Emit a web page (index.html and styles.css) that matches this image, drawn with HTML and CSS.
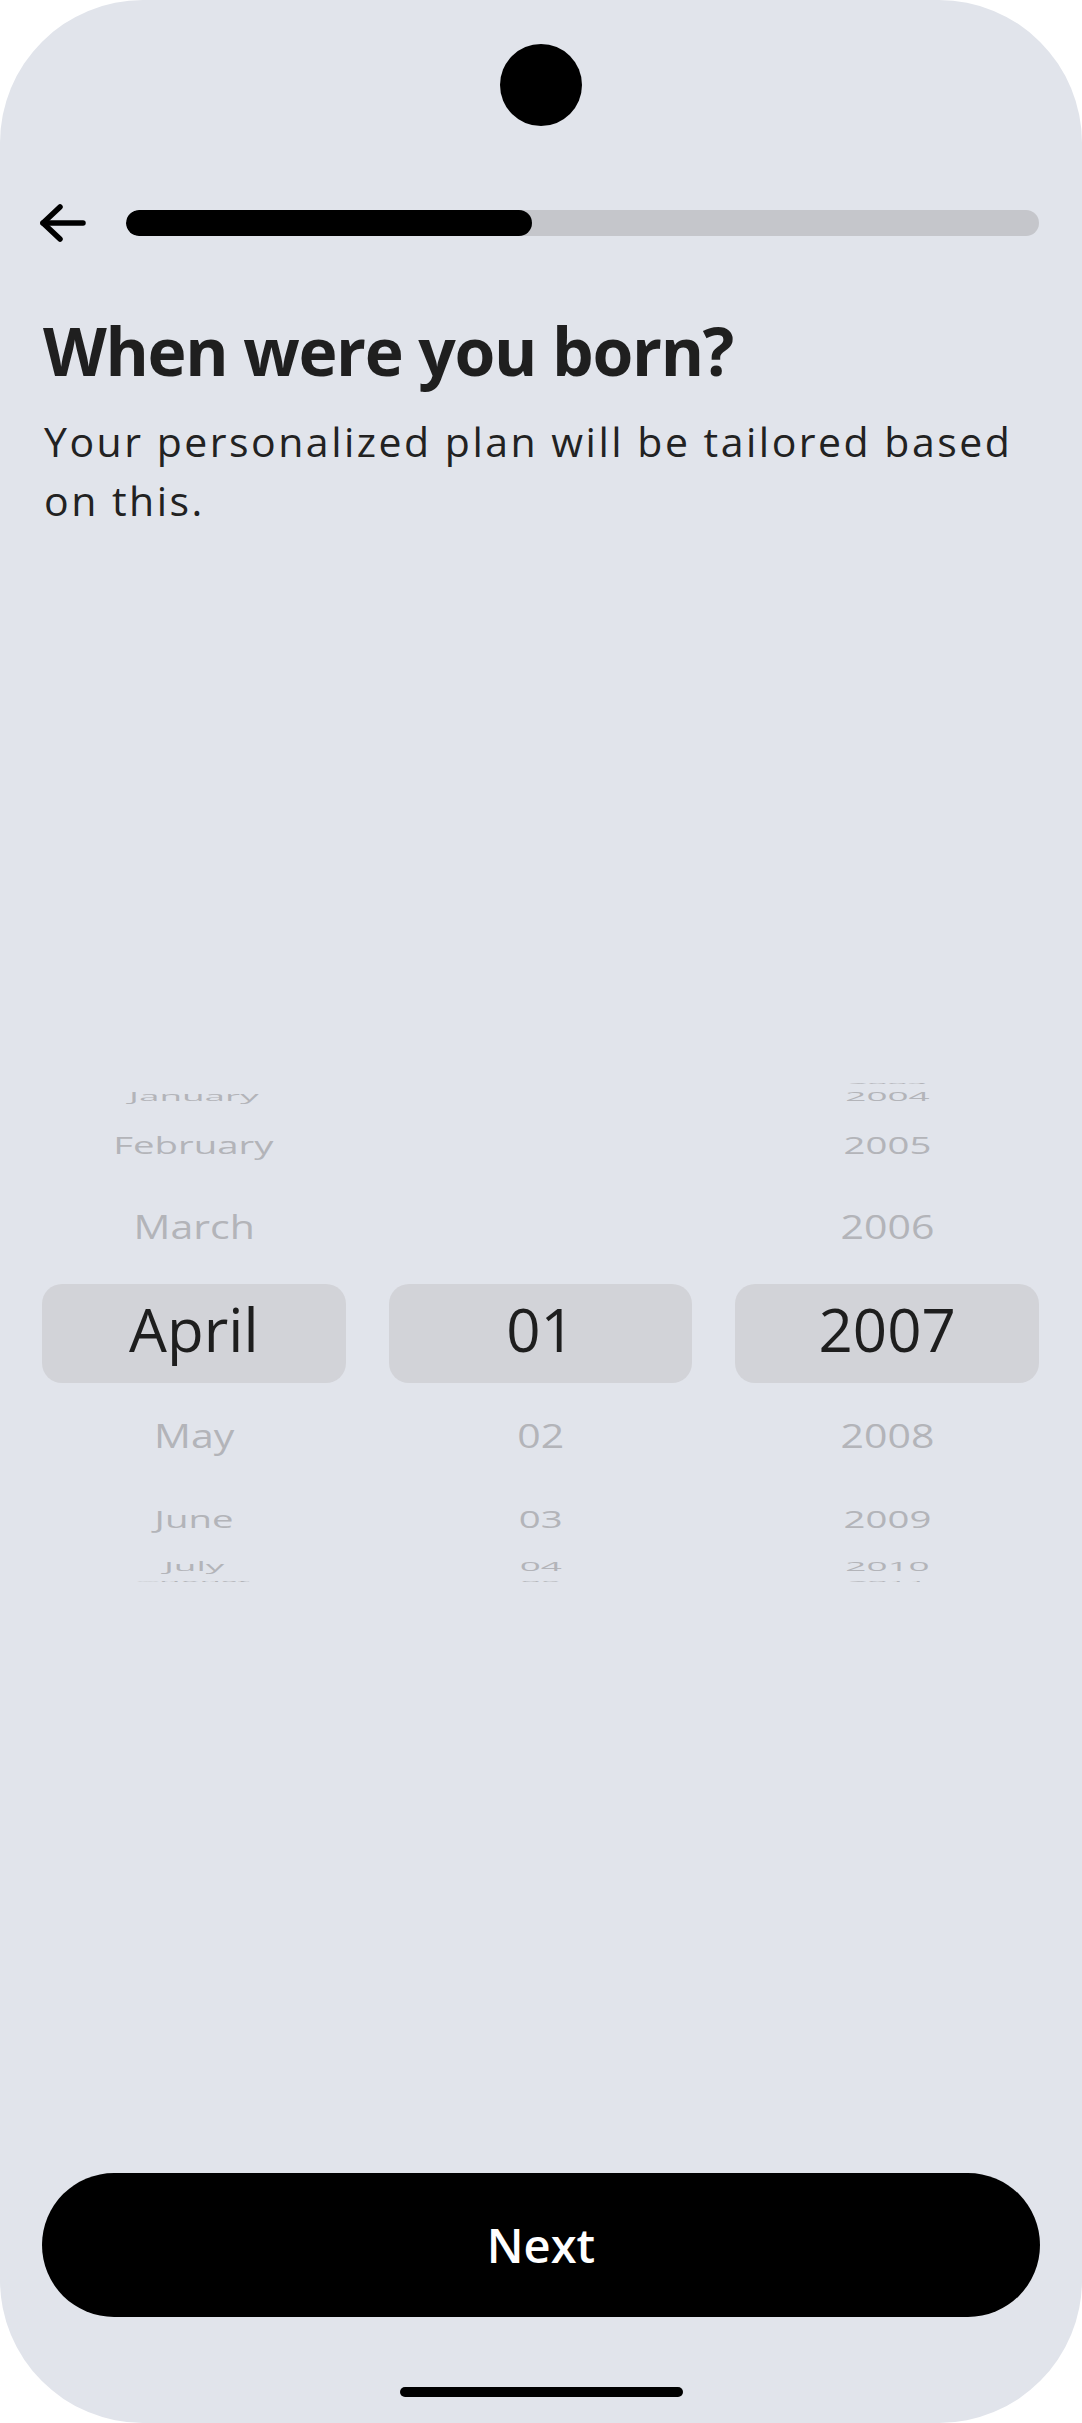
FILE: index.html
```html
<!DOCTYPE html>
<html lang="en">
<head>
<meta charset="utf-8">
<title>When were you born?</title>
<link rel="stylesheet" href="styles.css">
</head>
<body>
<div class="screen">
  <div class="camera"></div>

  <header class="topbar">
    <button class="back" aria-label="Back">
      <svg width="48" height="40" viewBox="0 0 48 40" fill="none" stroke="#000" stroke-width="5.5" stroke-linecap="round" stroke-linejoin="round">
        <path d="M45 20H5"/>
        <path d="M22 4L5 20L22 36"/>
      </svg>
    </button>
    <div class="progress"><div class="progress-fill" style="width:44.5%"></div></div>
  </header>

  <h1 class="title">When were you born?</h1>
  <p class="subtitle">Your personalized plan will be tailored based on this.</p>

  <section class="picker">
    <div class="wheel">
      <div class="sel">April</div>
      <div class="item o-m3">January</div>
      <div class="item o-m2">February</div>
      <div class="item o-m1">March</div>
      <div class="item o-p1">May</div>
      <div class="item o-p2">June</div>
      <div class="item o-p3">July</div>
      <div class="item o-p4">August</div>
    </div>
    <div class="wheel">
      <div class="sel">01</div>
      <div class="item o-p1">02</div>
      <div class="item o-p2">03</div>
      <div class="item o-p3">04</div>
      <div class="item o-p4">05</div>
    </div>
    <div class="wheel">
      <div class="sel">2007</div>
      <div class="item o-m4">2003</div>
      <div class="item o-m3">2004</div>
      <div class="item o-m2">2005</div>
      <div class="item o-m1">2006</div>
      <div class="item o-p1">2008</div>
      <div class="item o-p2">2009</div>
      <div class="item o-p3">2010</div>
      <div class="item o-p4">2011</div>
    </div>
  </section>

  <button class="next">Next</button>
  <div class="home-indicator"></div>
</div>
</body>
</html>
```

FILE: styles.css
```css
* { box-sizing: border-box; }

html, body {
  margin: 0;
  padding: 0;
  background: #ffffff;
}

body {
  font-family: "Open Sans", "Noto Sans", "Liberation Sans", sans-serif;
  color: #1f1f1f;
}

.screen {
  width: 1082px;
  height: 2423px;
  border-radius: 143px;
  background: #e1e4eb;
  overflow: hidden;
  display: flex;
  flex-direction: column;
}

.camera {
  align-self: center;
  width: 82px;
  height: 82px;
  margin-top: 44px;
  border-radius: 50%;
  background: #000;
  flex: none;
}

.topbar {
  display: flex;
  align-items: center;
  gap: 40px;
  height: 40px;
  margin-top: 77px;
  padding: 0 43px 0 38px;
  flex: none;
}

.back {
  display: block;
  width: 48px;
  height: 40px;
  padding: 0;
  border: 0;
  background: none;
  flex: none;
}

.back svg { display: block; }

.progress {
  flex: 1;
  height: 26px;
  border-radius: 13px;
  background: #c5c6cb;
  overflow: hidden;
}

.progress-fill {
  height: 100%;
  border-radius: 13px;
  background: #000;
}

.title {
  margin: 68px 0 0;
  padding: 0 40px 0 43px;
  font-size: 66px;
  line-height: 79px;
  font-weight: 700;
  letter-spacing: -1.3px;
  color: #1f1f1f;
  flex: none;
}

.subtitle {
  margin: 22px 0 0;
  padding: 0 40px 0 44px;
  font-size: 41px;
  line-height: 59px;
  font-weight: 400;
  letter-spacing: 2.5px;
  color: #222222;
  flex: none;
}

.picker {
  display: flex;
  gap: 43px;
  margin-top: 552px;
  padding: 0 43px 0 42px;
  height: 502px;
  flex: none;
}

.wheel {
  flex: 1;
  display: grid;
  overflow: hidden;
}

.sel {
  grid-area: 1 / 1;
  align-self: center;
  height: 99px;
  padding-bottom: 8px;
  border-radius: 20px;
  background: #d2d3d8;
  display: flex;
  align-items: center;
  justify-content: center;
  font-size: 60px;
  font-weight: 500;
  color: #1e1e1e;
}

.item {
  grid-area: 1 / 1;
  align-self: center;
  justify-self: center;
  font-size: 38px;
  line-height: 1;
  font-weight: 500;
  color: #b3b4b9;
  white-space: nowrap;
  transform: translateY(var(--dy)) scale(var(--sx), var(--sy));
}

.o-m4 { --dy: -250px; --sx: 0.92; --sy: 0.05; }
.o-m3 { --dy: -237px; --sx: 0.97; --sy: 0.32; }
.o-m2 { --dy: -189px; --sx: 1.01; --sy: 0.645; }
.o-m1 { --dy: -107px; --sx: 1.08; --sy: 0.886; }
.o-p1 { --dy: 101.5px; --sx: 1.08; --sy: 0.886; }
.o-p2 { --dy: 185px; --sx: 1.01; --sy: 0.645; }
.o-p3 { --dy: 233px; --sx: 0.97; --sy: 0.32; }
.o-p4 { --dy: 248px; --sx: 0.92; --sy: 0.05; }

.next {
  display: block;
  margin: 589px 42px 0 42px;
  height: 144px;
  border: 0;
  border-radius: 72px;
  background: #000;
  color: #ffffff;
  font-family: "Open Sans", "Noto Sans", "Liberation Sans", sans-serif;
  font-size: 47px;
  font-weight: 600;
  flex: none;
}

.home-indicator {
  align-self: center;
  width: 283px;
  height: 10px;
  margin-top: 70px;
  border-radius: 5px;
  background: #000;
  flex: none;
}
```
